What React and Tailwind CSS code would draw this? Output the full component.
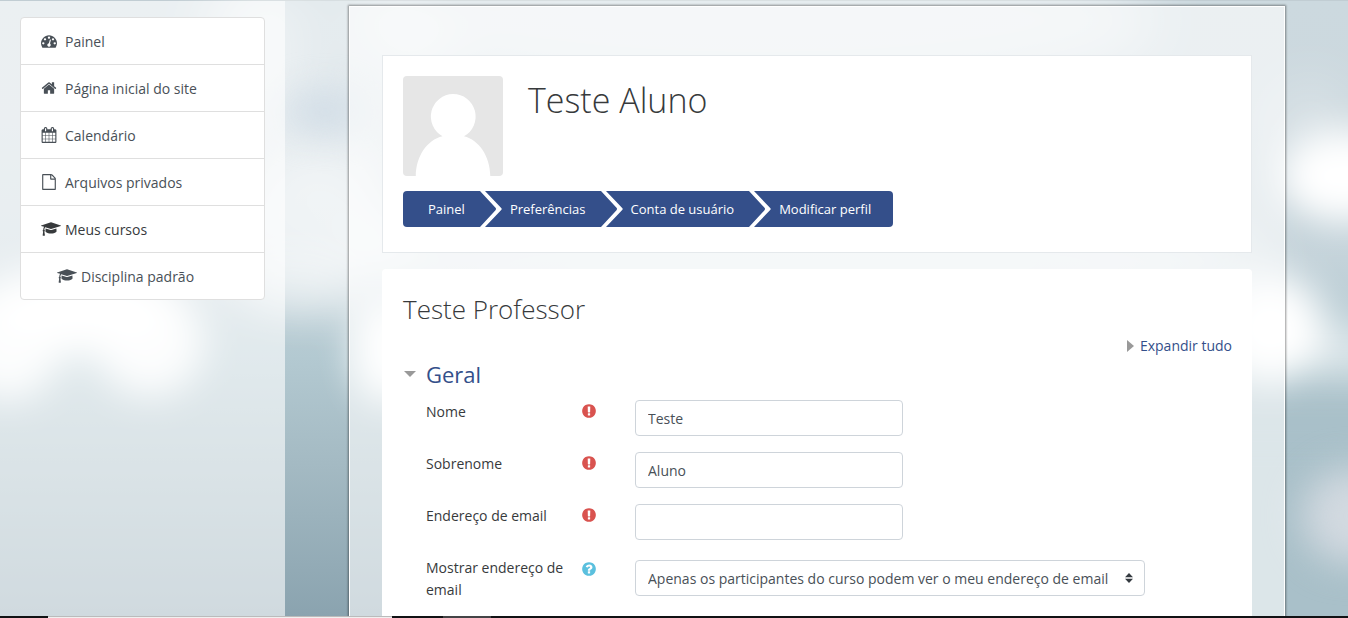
import React from "react";

const ICONS = {
  dashboard: {
    width: 1792,
    d: "M384 1152q0-53-37.5-90.5t-90.5-37.5-90.5 37.5-37.5 90.5 37.5 90.5 90.5 37.5 90.5-37.5 37.5-90.5zm192-448q0-53-37.5-90.5t-90.5-37.5-90.5 37.5-37.5 90.5 37.5 90.5 90.5 37.5 90.5-37.5 37.5-90.5zm428 481l101-382q6-26-7.5-48.5t-38.5-29.5-48 6.5-30 39.5l-101 382q-60 5-107 43.5t-63 98.5q-20 77 20 146t117 89 146-20 89-117q16-60-6-117t-72-91zm660-33q0-53-37.5-90.5t-90.5-37.5-90.5 37.5-37.5 90.5 37.5 90.5 90.5 37.5 90.5-37.5 37.5-90.5zm-640-640q0-53-37.5-90.5t-90.5-37.5-90.5 37.5-37.5 90.5 37.5 90.5 90.5 37.5 90.5-37.5 37.5-90.5zm448 192q0-53-37.5-90.5t-90.5-37.5-90.5 37.5-37.5 90.5 37.5 90.5 90.5 37.5 90.5-37.5 37.5-90.5zm320 448q0 261-141 483-19 29-54 29h-1402q-35 0-54-29-141-221-141-483 0-182 71-348t191-286 286-191 348-71 348 71 286 191 191 286 71 348z",
  },
  home: {
    width: 1792,
    d: "M1472 992v480q0 26-19 45t-45 19h-384v-384h-256v384h-384q-26 0-45-19t-19-45v-480q0-1 .5-3t.5-3l575-474 575 474q1 2 1 6zm223-69l-62 74q-8 9-21 11h-3q-13 0-21-7l-692-577-692 577q-12 8-24 7-13-2-21-11l-62-74q-8-10-7-23.5t11-21.5l719-599q32-26 76-26t76 26l244 204v-195q0-14 9-23t23-9h192q14 0 23 9t9 23v408l219 182q10 8 11 21.5t-7 23.5z",
  },
  calendar: {
    width: 1792,
    d: "M192 1664h288v-288h-288v288zm352 0h320v-288h-320v288zm-352-352h288v-320h-288v320zm352 0h320v-320h-320v320zm-352-384h288v-288h-288v288zm736 736h320v-288h-320v288zm-384-736h320v-288h-320v288zm768 736h288v-288h-288v288zm-384-352h320v-320h-320v320zm-352-864v-288q0-13-9.5-22.5t-22.5-9.5h-64q-13 0-22.5 9.5t-9.5 22.5v288q0 13 9.5 22.5t22.5 9.5h64q13 0 22.5-9.5t9.5-22.5zm736 864h288v-320h-288v320zm-384-384h320v-288h-320v288zm384 0h288v-288h-288v288zm32-480v-288q0-13-9.5-22.5t-22.5-9.5h-64q-13 0-22.5 9.5t-9.5 22.5v288q0 13 9.5 22.5t22.5 9.5h64q13 0 22.5-9.5t9.5-22.5zm384-64v1280q0 52-38 90t-90 38h-1408q-52 0-90-38t-38-90v-1280q0-52 38-90t90-38h128v-96q0-66 47-113t113-47h64q66 0 113 47t47 113v96h384v-96q0-66 47-113t113-47h64q66 0 113 47t47 113v96h128q52 0 90 38t38 90z",
  },
  file: {
    width: 1792,
    d: "M1596 380q28 28 48 76t20 88v1152q0 40-28 68t-68 28h-1344q-40 0-68-28t-28-68v-1600q0-40 28-68t68-28h896q40 0 88 20t76 48zm-444-244v376h376q-10-29-22-41l-313-313q-12-12-41-22zm384 1528v-1024h-416q-40 0-68-28t-28-68v-416h-768v1536h1280z",
  },
  course: {
    width: 2304,
    d: "M1774 836l18 316q4 69-82 128t-235 93.5-323 34.5-323-34.5-235-93.5-82-128l18-316 574 181q22 7 48 7t48-7zm530-324q0 23-22 31l-1120 352q-4 1-10 1t-10-1l-652-206q-43 34-71 111.5t-34 178.5q63 36 63 109 0 69-58 107l58 433q2 14-8 25-9 11-24 11h-192q-15 0-24-11-10-11-8-25l58-433q-58-38-58-107 0-73 65-111 11-207 98-330l-333-104q-22-8-22-31t22-31l1120-352q4-1 10-1t10 1l1120 352q22 8 22 31z",
  },
  required: {
    width: 1792,
    d: "M896 128q209 0 385.5 103t279.5 279.5 103 385.5-103 385.5-279.5 279.5-385.5 103-385.5-103-279.5-279.5-103-385.5 103-385.5 279.5-279.5 385.5-103zm128 1247v-190q0-14-9-23.5t-22-9.5h-192q-13 0-23 10t-10 23v190q0 13 10 23t23 10h192q13 0 22-9.5t9-23.5zm-2-344l18-621q0-12-10-18-10-8-24-8h-220q-14 0-24 8-10 6-10 18l17 621q0 10 10 17.5t24 7.5h185q14 0 23.5-7.5t10.5-17.5z",
  },
  help: {
    width: 1792,
    d: "M1024 1376v-192q0-14-9-23t-23-9h-192q-14 0-23 9t-9 23v192q0 14 9 23t23 9h192q14 0 23-9t9-23zm256-672q0-88-55.5-163t-138.5-116-170-41q-243 0-371 213-15 24 8 42l132 100q7 6 19 6 16 0 25-12 53-68 86-92 34-24 86-24 48 0 85.500 26t37.500 59q0 38-20 61t-68 45q-63 28-115.500 86.500t-52.500 125.500v36q0 14 9 23t23 9h192q14 0 23-9t9-23q0-19 21.500-49.500t54.500-49.500q32-18 49-28.500t46-35 44.500-48 28-60.500 12.500-81zm384 192q0 209-103 385.500t-279.500 279.500-385.500 103-385.500-103-279.500-279.500-103-385.500 103-385.500 279.500-279.500 385.500-103 385.500 103 279.500 279.500 103 385.500z",
  },
};

function Icon({ name, className }) {
  const icon = ICONS[name];
  return (
    <svg viewBox={`0 0 ${icon.width} 1792`} fill="currentColor" aria-hidden="true" className={className}>
      <path d={icon.d} />
    </svg>
  );
}

function Backdrop() {
  return (
    <svg
      viewBox="0 0 1348 618"
      preserveAspectRatio="none"
      aria-hidden="true"
      className="absolute inset-0 h-full w-full"
    >
      <defs>
        <linearGradient id="sky" x1="0" y1="0" x2="0" y2="1">
          <stop offset="0" stopColor="#ccd9df" />
          <stop offset="0.2" stopColor="#ccd8de" />
          <stop offset="0.42" stopColor="#c4d3da" />
          <stop offset="0.58" stopColor="#b3c9d1" />
          <stop offset="0.75" stopColor="#a4bac3" />
          <stop offset="1" stopColor="#8aa3af" />
        </linearGradient>
        <linearGradient id="east" x1="0" y1="0" x2="1" y2="0">
          <stop offset="0.3" stopColor="#a9c0c9" stopOpacity="0" />
          <stop offset="0.8" stopColor="#a9c0c9" />
        </linearGradient>
        <filter id="soft" x="-100%" y="-100%" width="300%" height="300%" colorInterpolationFilters="sRGB">
          <feGaussianBlur stdDeviation="18" />
        </filter>
        <filter id="softer" x="-100%" y="-100%" width="300%" height="300%" colorInterpolationFilters="sRGB">
          <feGaussianBlur stdDeviation="28" />
        </filter>
      </defs>
      <rect width="1348" height="618" fill="url(#sky)" />
      <rect y="400" width="1500" height="340" fill="url(#east)" filter="url(#softer)" />
      <g filter="url(#softer)" fill="#ffffff">
        <ellipse cx="330" cy="70" rx="120" ry="120" fillOpacity="0.45" />
        <ellipse cx="250" cy="50" rx="50" ry="80" fillOpacity="0.4" />
        <ellipse cx="310" cy="225" rx="110" ry="72" fillOpacity="0.7" />
        <ellipse cx="760" cy="20" rx="400" ry="80" fillOpacity="0.5" />
        <ellipse cx="800" cy="265" rx="470" ry="70" fillOpacity="0.6" />
        <ellipse cx="1310" cy="130" rx="40" ry="50" fillOpacity="0.3" />
      </g>
      <ellipse cx="325" cy="112" rx="40" ry="20" fill="#d0dce6" filter="url(#soft)" />
      <g filter="url(#soft)" fill="#ffffff">
        <ellipse cx="85" cy="308" rx="98" ry="46" />
        <ellipse cx="150" cy="342" rx="54" ry="54" fillOpacity="0.9" />
        <ellipse cx="8" cy="340" rx="54" ry="60" fillOpacity="0.9" />
        <ellipse cx="388" cy="350" rx="34" ry="54" />
        <ellipse cx="300" cy="282" rx="60" ry="34" fillOpacity="0.35" />
        <ellipse cx="1344" cy="176" rx="64" ry="46" />
        <ellipse cx="1270" cy="328" rx="54" ry="54" />
        <ellipse cx="1345" cy="352" rx="50" ry="28" fillOpacity="0.5" />
      </g>
      <ellipse cx="1352" cy="516" rx="50" ry="48" fill="#d2d9e0" filter="url(#soft)" />
    </svg>
  );
}

const NAV = [
  { icon: "dashboard", label: "Painel" },
  { icon: "home", label: "Página inicial do site" },
  { icon: "calendar", label: "Calendário" },
  { icon: "file", label: "Arquivos privados" },
  { icon: "course", label: "Meus cursos", strong: true },
  { icon: "course", label: "Disciplina padrão", nested: true },
];

function Sidebar() {
  return (
    <nav className="w-[285px] shrink-0 bg-white/60 px-5 pt-4">
      <ul className="divide-y divide-[#dfdfdf] rounded border border-[#dfdfdf] bg-white">
        {NAV.map((item) => (
          <li key={item.label} className={item.nested ? "pl-9" : "pl-5"}>
            <a
              href="#"
              className={`flex items-center gap-1 pt-[13px] pb-[11px] leading-[22px] ${item.strong ? "text-[#373a3c]" : "text-[#495057]"}`}
            >
              <span className="flex w-5 shrink-0 items-center pb-[2px]">
                <Icon name={item.icon} className={item.icon === "course" ? "h-4 w-5" : "h-4 w-4"} />
              </span>
              {item.label}
            </a>
          </li>
        ))}
      </ul>
    </nav>
  );
}

function Avatar() {
  return (
    <svg viewBox="0 0 100 100" role="img" aria-label="Teste Aluno" className="size-[100px] shrink-0 rounded">
      <rect width="100" height="100" fill="#e6e6e6" />
      <path
        fill="#ffffff"
        d="M50 18a22.500 22.500 0 0 1 11 42.200C76 64 87 80 87.300 100H12.800C13 80 24 64 39.500 60.200A22.500 22.500 0 0 1 50 18z"
      />
    </svg>
  );
}

const CRUMBS = ["Painel", "Preferências", "Conta de usuário", "Modificar perfil"];

function Breadcrumb() {
  return (
    <nav aria-label="Trilha" className="mt-[15px] flex">
      <ol className="flex h-9 items-center overflow-hidden rounded bg-[#344f8a] pr-[22px] pl-[25px] text-[13px] text-white">
        {CRUMBS.map((crumb, i) => (
          <li key={crumb} className="flex items-center">
            {i > 0 && (
              <svg viewBox="0 0 22 36" aria-hidden="true" className="mr-2 ml-[15px] h-9 w-[22px]">
                <path d="M0 0h5l16.200 17q1 1 0 2L5 36H0L15.500 19.200q1-1.200 0-2.400z" fill="#ffffff" />
              </svg>
            )}
            <a href="#" className="pt-px">
              {crumb}
            </a>
          </li>
        ))}
      </ol>
    </nav>
  );
}

function FormRow({ id, label, icon, children }) {
  return (
    <div className="flex items-start">
      <label htmlFor={id} className="w-[155px] shrink-0 pt-px pr-3 leading-[22px]">
        {label}
      </label>
      <span className="flex h-[22px] w-[54px] shrink-0 items-center">
        {icon === "help" ? (
          <button type="button" aria-label="Ajuda" className="mt-1">
            <Icon name="help" className="size-4 text-[#5bc0de]" />
          </button>
        ) : (
          <Icon name="required" className="size-4 text-[#d9534f]" />
        )}
      </span>
      {children}
    </div>
  );
}

const FIELDS = [
  { id: "nome", label: "Nome", value: "Teste" },
  { id: "sobrenome", label: "Sobrenome", value: "Aluno" },
  { id: "email", label: "Endereço de email", value: "" },
];

const EMAIL_DISPLAY = "Apenas os participantes do curso podem ver o meu endereço de email";

function ProfileForm() {
  return (
    <form className="mt-[10px] pl-6 text-[#373a3c]">
      <div className="flex flex-col gap-4">
        {FIELDS.map((field) => (
          <FormRow key={field.id} id={field.id} label={field.label}>
            <input
              id={field.id}
              type="text"
              defaultValue={field.value}
              className="h-9 w-[268px] rounded border border-[#ced4da] bg-white px-3 text-[#495057]"
            />
          </FormRow>
        ))}
        <FormRow id="mostrar" label="Mostrar endereço de email" icon="help">
          <span className="relative mt-1">
            <select
              id="mostrar"
              className="h-9 w-[510px] appearance-none rounded border border-[#ced4da] bg-white px-3 text-[#495057]"
            >
              <option>{EMAIL_DISPLAY}</option>
            </select>
            <svg
              viewBox="0 0 8 10"
              aria-hidden="true"
              className="pointer-events-none absolute top-[13px] right-3 h-[10px] w-2"
            >
              <path d="M4 0l4 4.200H0zM0 5.800h8L4 10z" fill="#343a40" />
            </svg>
          </span>
        </FormRow>
      </div>
    </form>
  );
}

export default function App() {
  return (
    <div className="relative isolate flex min-h-screen flex-col overflow-hidden font-['Open_Sans','Noto_Sans',sans-serif] text-[14px] text-[#373a3c]">
      <div className="absolute inset-0 -z-10">
        <Backdrop />
      </div>
      <div className="flex flex-1 border-t border-black/5">
        <Sidebar />
        <main className="mt-[5px] mr-[63px] ml-16 flex min-w-0 flex-1 flex-col border border-b-0 border-white bg-white/60 px-8 pt-12 shadow-[0_0_2px_1px_rgba(0,0,0,0.4)]">
          <header className="border border-[#e5e9ec] bg-white px-5 pt-5 pb-[25px]">
            <div className="flex gap-[25px]">
              <Avatar />
              <h1 className="text-[34px] leading-[48px] font-light">Teste Aluno</h1>
            </div>
            <Breadcrumb />
          </header>
          <section className="mt-4 flex-1 rounded-t bg-white px-5 pt-5">
            <h2 className="pl-px text-[26px] leading-[40px] font-light">Teste Professor</h2>
            <div className="mt-[6px] flex justify-end">
              <a href="#" className="flex items-center gap-[6px] leading-[22px] text-[#344f8a]">
                <svg viewBox="0 0 7 12" aria-hidden="true" className="h-3 w-[7px]">
                  <path d="M0 0l7 6-7 6z" fill="#999999" />
                </svg>
                Expandir tudo
              </a>
            </div>
            <h3 className="mt-px pl-px">
              <button type="button" className="flex items-center gap-[10px] text-[22px] leading-8 text-[#344f8a]">
                <svg viewBox="0 0 12 6" aria-hidden="true" className="ml-px h-[6px] w-3">
                  <path d="M0 0h12L6 6z" fill="#999999" />
                </svg>
                Geral
              </button>
            </h3>
            <ProfileForm />
          </section>
        </main>
      </div>
      <div aria-hidden="true" className="flex h-[2px] bg-[#111214]">
        <div className="ml-12 w-[344px] border-t border-[#bbbbbb] bg-[#f0f0f0]" />
        <div className="ml-[51px] w-12 bg-[#444446]" />
      </div>
    </div>
  );
}
